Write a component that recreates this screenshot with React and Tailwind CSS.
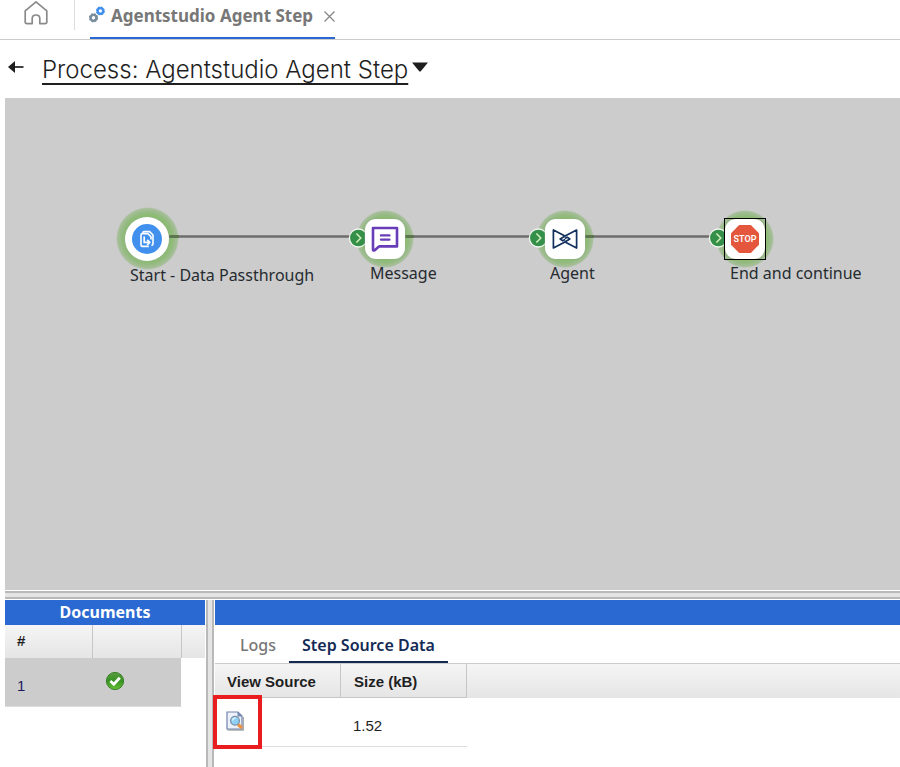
import React from "react";

const NOTO = "font-['Noto_Sans',sans-serif]";
const HEAD_FILL = "bg-linear-to-b from-[#f5f5f5] to-[#e5e5e5]";

function HomeIcon() {
  return (
    <svg width="24" height="26" viewBox="0 0 24 26" fill="none" stroke="#8a8a8a" strokeWidth="1.7" strokeLinejoin="round">
      <path d="M1.2 10.8 L12 1.8 L22.8 10.8 V22 Q22.8 23.6 21 23.6 H15.8 V18.4 Q15.8 15 12 15 Q8.2 15 8.2 18.4 V23.6 H3 Q1.2 23.6 1.2 22 Z" />
    </svg>
  );
}

function GearsIcon() {
  return (
    <svg width="16" height="17" viewBox="0 0 16 17" fill="none">
      <circle cx="4.5" cy="11.8" r="2.9" stroke="#788c9b" strokeWidth="2.4" />
      <circle cx="4.5" cy="11.8" r="4" stroke="#788c9b" strokeWidth="1.2" strokeDasharray="1.9 1.24" />
      <circle cx="11.4" cy="4.9" r="2.8" stroke="#4190ee" strokeWidth="2.4" />
      <circle cx="11.4" cy="4.9" r="3.8" stroke="#4190ee" strokeWidth="1.2" strokeDasharray="1.8 1.18" />
    </svg>
  );
}

function StartIcon() {
  return (
    <svg width="30" height="30" viewBox="0 0 30 30" fill="none" stroke="#fff" strokeWidth="1.4" strokeLinejoin="round">
      <circle cx="15" cy="15" r="15" fill="#4190ee" stroke="none" />
      <path d="M11 9.4 V8.4 Q11 7.6 11.8 7.6 H17.6 L21 11 V20 Q21 21.2 19.4 21.4" strokeWidth="1.6" />
      <path d="M16.8 22.4 H10.2 Q9 22.4 9 21.2 V11 Q9 9.6 10.2 9.6 H15.8 L19 12.8 V15.6" strokeWidth="1.6" />
      <path d="M12.2 12.4 V18.4 H17 M15.2 15.8 L17.8 18.4 L15.2 21" strokeWidth="1.7" />
    </svg>
  );
}

function MessageIcon() {
  return (
    <svg width="28" height="26" viewBox="0 0 28 26" fill="none" stroke="#6a3db8" strokeWidth="2.6" strokeLinejoin="round" strokeLinecap="round">
      <path d="M2 2 H26 V20.4 H8 L3.4 24.4 Q2 25 2 23.4 Z" />
      <path d="M10 9.4 H18.4 M10 13.6 H18.4" strokeWidth="2.4" />
    </svg>
  );
}

function AgentIcon() {
  return (
    <svg width="26" height="20" viewBox="0 0 26 20" fill="none" stroke="#12305c" strokeWidth="1.7" strokeLinejoin="round" strokeLinecap="round">
      <path d="M12 6.6 L1.4 1 V19 L12 13.4 L17.8 9.9 L15.2 8.2 L13.4 9.2" />
      <path d="M14 13.4 L24.6 19 V1 L14 6.6 L8.2 10.1 L10.8 11.8 L12.6 10.8" />
    </svg>
  );
}

function StopIcon() {
  return (
    <svg width="28" height="28" viewBox="0 0 28 28">
      <path d="M8.2 0 H19.8 L28 8.2 V19.8 L19.8 28 H8.2 L0 19.8 V8.2 Z" fill="#e4573d" />
      <text x="14" y="17" textAnchor="middle" fontSize="9" fontWeight="600" fill="#fff" fontFamily="Roboto, sans-serif">STOP</text>
    </svg>
  );
}

function SuccessIcon() {
  return (
    <svg width="20" height="20" viewBox="0 0 20 20" role="img" aria-label="Success">
      <defs>
        <linearGradient id="ok" x1="0" y1="0" x2="0" y2="1">
          <stop offset="0" stopColor="#5b9c43" />
          <stop offset="0.5" stopColor="#369321" />
          <stop offset="1" stopColor="#69c235" />
        </linearGradient>
      </defs>
      <circle cx="10" cy="10" r="8.6" fill="url(#ok)" stroke="#398029" strokeWidth="1" />
      <path d="M5.4 10 L8.8 13.2 L14.8 6.8" fill="none" stroke="#fff" strokeWidth="2.8" />
    </svg>
  );
}

function ViewIcon() {
  return (
    <svg width="18" height="20" viewBox="0 0 18 20">
      <path d="M1.5 19 H17.5 V6" fill="none" stroke="#aaa" strokeWidth="1.5" />
      <path d="M1 1 H12 L16 5 V18 H1 Z" fill="#edf2fa" stroke="#6f83ad" strokeWidth="1.2" />
      <path d="M12 1 V5 H16 Z" fill="#8495b9" stroke="#6f83ad" />
      <path d="M12 13.5 L16 17" stroke="#ee9440" strokeWidth="3.2" />
      <circle cx="9" cy="9.8" r="4.4" fill="#8fd1f4" stroke="#7b8ea7" strokeWidth="1.3" />
      <path d="M6.4 9.6 Q7 7 9.6 7" fill="none" stroke="#d8f2ff" strokeWidth="1.4" />
    </svg>
  );
}

function Badge() {
  return (
    <svg className="absolute top-[22px] left-5" width="20" height="20" viewBox="0 0 20 20" fill="none">
      <circle cx="10.4" cy="10" r="9" fill="#348f49" stroke="#f1f7ef" strokeWidth="1.3" />
      <path d="M8.4 5.4 L12.8 10 L8.4 14.6" stroke="#d3f0b8" strokeWidth="1.5" />
    </svg>
  );
}

function Glow({ className }) {
  return (
    <span
      className={`absolute rounded-full bg-[radial-gradient(closest-side,#8abd70_0%,#8abd70_72%,#94ba80_82%,#a7bf9b_95%,#cccccc00_100%)] ${className}`}
    />
  );
}

function Step({ className, label, last, children }) {
  return (
    <div className={`absolute top-[108px] h-20 w-[180px] ${className}`}>
      <Glow className="top-1 left-7 size-[58px]" />
      {!last && <span className="absolute top-[29px] left-[76px] h-[3px] w-[10px] bg-[#5d7650]" />}
      <Badge />
      <button
        type="button"
        aria-label={label}
        className="absolute top-[13px] left-[37px] flex size-10 items-center justify-center rounded-[11px] bg-white shadow-[0_0_2px_#99a899]"
      >
        {children}
      </button>
      {last && <span className="absolute top-3 left-9 size-[42px] border border-black" />}
      <span className="absolute top-[55px] left-[42px] text-base leading-6 whitespace-nowrap">{label}</span>
    </div>
  );
}

function ProcessCanvas() {
  return (
    <main className={`relative ml-[5px] h-[492px] overflow-hidden bg-[#ccc] text-[#252b30] ${NOTO}`}>
      <span className="absolute top-[137px] left-[165px] h-[3px] w-[545px] border-y border-[#858585] bg-[#6c6c6c]" />
      <Glow className="top-[109px] left-[111px] size-[63px]" />
      <span className="absolute top-[137px] left-[164px] h-[3px] w-[10px] bg-[#5d7650]" />
      <button
        type="button"
        aria-label="Start - Data Passthrough"
        className="absolute top-[119px] left-[120px] flex size-11 items-center justify-center rounded-full bg-white shadow-[0_0_2px_#99a899]"
      >
        <StartIcon />
      </button>
      <span className="absolute top-[165px] left-[125px] text-base leading-6 whitespace-nowrap">Start - Data Passthrough</span>
      <Step className="left-[323px]" label="Message"><MessageIcon /></Step>
      <Step className="left-[503px]" label="Agent"><AgentIcon /></Step>
      <Step className="left-[683px]" label="End and continue" last><StopIcon /></Step>
    </main>
  );
}

function DocumentsTable() {
  return (
    <section className="w-[201px] shrink-0 border-r border-white">
      <h2 className={`h-[25px] bg-[#2a69d1] text-center text-base leading-6 font-bold text-white ${NOTO}`}>Documents</h2>
      <table className="w-full table-fixed border-separate border-spacing-0 text-left">
        <thead>
          <tr className="h-[33px]">
            <th className={`w-[88px] border-r border-[#c6c6c6] pl-3 text-[15px] font-bold ${HEAD_FILL}`}>#</th>
            <th className={`w-[89px] border-r border-[#c6c6c6] ${HEAD_FILL}`} aria-label="Status" />
            <td className={HEAD_FILL} />
          </tr>
        </thead>
        <tbody>
          <tr className="h-[49px]">
            <td className="border-b border-[#ddd] bg-[#ccc] pt-2 pl-3 text-[15px] text-[#1c1a5c]">1</td>
            <td className="border-r border-b border-r-white border-b-[#ddd] bg-[#ccc] pb-[2px] pl-3"><SuccessIcon /></td>
            <td />
          </tr>
        </tbody>
      </table>
    </section>
  );
}

function SourceTable() {
  return (
    <section className="min-w-0 flex-1 border-l border-white">
      <div className="h-[25px] bg-[#2a69d1]" />
      <nav className={`flex h-[39px] items-end border-b border-[#ccc] pl-3 text-base ${NOTO}`}>
        <button type="button" className="h-[38px] px-[13px] pt-[2px] font-medium text-[#777]">Logs</button>
        <button type="button" className="h-[38px] border-b-2 border-[#142a55] px-[13px] pt-1 font-semibold text-[#142a55]">Step Source Data</button>
      </nav>
      <table className="w-full table-fixed border-separate border-spacing-0 text-left">
        <thead>
          <tr className="h-[34px] text-[15px]">
            <th className={`w-[126px] border-r border-b border-[#c6c6c6] pt-1 pl-3 font-bold ${HEAD_FILL}`}>View Source</th>
            <th className={`w-[126px] border-r border-b border-[#c6c6c6] pt-1 pl-[13px] font-bold ${HEAD_FILL}`}>Size (kB)</th>
            <td className={HEAD_FILL} />
          </tr>
        </thead>
        <tbody>
          <tr className="h-[49px]">
            <td className="relative border-b border-[#ddd] pb-[2px] pl-[11px]">
              <button type="button" aria-label="View source" className="block"><ViewIcon /></button>
              <span className="absolute -top-[3px] -left-[2px] h-[54px] w-[49px] border-4 border-[#e91c20]" />
            </td>
            <td className="border-b border-[#ddd] pt-2 pl-3 text-[15px]">1.52</td>
            <td />
          </tr>
        </tbody>
      </table>
    </section>
  );
}

export default function App() {
  return (
    <div className="flex min-h-screen flex-col bg-white font-['Liberation_Sans',Arial,sans-serif] text-[#1f1f1f]">
      <div className="flex h-10 border-b border-[#ccc]">
        <div className="h-[30px] w-[75px] border-r border-[#ddd] pl-6">
          <button type="button" aria-label="Home" className="block"><HomeIcon /></button>
        </div>
        <div className="ml-[15px] flex h-[39px] items-start border-b-2 border-[#2a69d1]">
          <button type="button" className={`flex gap-[6px] pt-1 text-[17px] leading-6 font-bold text-[#777] ${NOTO}`}>
            <span className="-ml-px pt-[2px]"><GearsIcon /></span>
            Agentstudio Agent Step
          </button>
          <button type="button" aria-label="Close tab" className="mt-[11px] ml-[11px]">
            <svg width="11" height="11" viewBox="0 0 11 11" stroke="#858585" strokeWidth="1.2"><path d="M.5 .5 L10.5 10.5 M10.5 .5 L.5 10.5" /></svg>
          </button>
        </div>
      </div>
      <header className="flex h-[58px] items-start pl-2">
        <button type="button" aria-label="Back" className="mt-5">
          <svg width="16" height="14" viewBox="0 0 16 14"><path d="M0 7 L7 1 V13 Z" fill="#1f1f1f" /><path d="M6 7 H15.5" stroke="#1f1f1f" strokeWidth="1.7" /></svg>
        </button>
        <h1 className="mt-[14px] ml-[18px] font-['Inter',sans-serif] text-2xl leading-8 font-light whitespace-nowrap underline decoration-2 underline-offset-[5px]">
          Process: Agentstudio Agent Step
        </h1>
        <button type="button" aria-label="Process menu" className="mt-[22px] ml-1">
          <svg width="16" height="10" viewBox="0 0 16 10"><path d="M0 .5 H16 L9 9 Q8 10 7 9 Z" fill="#1f1f1f" /></svg>
        </button>
      </header>
      <ProcessCanvas />
      <div className="my-px ml-[5px] h-2 border-y-2 border-[#b9b9b9] bg-[#e4e4e4]" />
      <div className="ml-[5px] flex flex-1">
        <DocumentsTable />
        <div className="w-2 shrink-0 border-x-2 border-[#b9b9b9] bg-[#e4e4e4]" />
        <SourceTable />
      </div>
    </div>
  );
}
